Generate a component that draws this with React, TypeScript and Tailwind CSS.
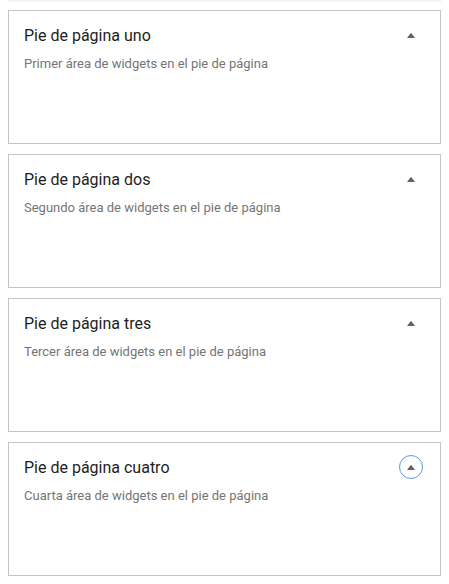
const areas = [
  { title: "Pie de página uno", desc: "Primer área de widgets en el pie de página" },
  { title: "Pie de página dos", desc: "Segundo área de widgets en el pie de página" },
  { title: "Pie de página tres", desc: "Tercer área de widgets en el pie de página" },
  { title: "Pie de página cuatro", desc: "Cuarta área de widgets en el pie de página", focused: true },
];

function ArrowUp() {
  return (
    <svg width="10" height="7" viewBox="0 0 10 7" className="text-[#5f6368]">
      <path d="M5 0.8 L9 6 L1 6 Z" fill="currentColor" />
    </svg>
  );
}

export default function App() {
  return (
    <div className="min-h-screen bg-white" style={{ fontFamily: "Roboto, 'Liberation Sans', sans-serif" }}>
      <div className="mx-2 h-[2px] bg-[#f3f3f4]" />
      <div className="px-2 pt-2 flex flex-col gap-[10px]">
        {areas.map((a) => (
          <div key={a.title} className="h-[134px] border border-[#c3c4c7] bg-white pl-[15px] pr-[17px] pt-[13px]">
            <div className="flex items-start justify-between">
              <h2 className="text-[16px] leading-6 text-[#1e1e1e] font-normal">{a.title}</h2>
              <button
                className={`-mt-px w-6 h-6 rounded-full flex items-center justify-center ${
                  a.focused ? "border-[1.5px] border-[#5a9ae0]" : "border-[1.5px] border-transparent"
                }`}
              >
                <ArrowUp />
              </button>
            </div>
            <p className="mt-[6px] text-[13px] leading-5 text-[#757575]">{a.desc}</p>
          </div>
        ))}
      </div>
    </div>
  );
}
